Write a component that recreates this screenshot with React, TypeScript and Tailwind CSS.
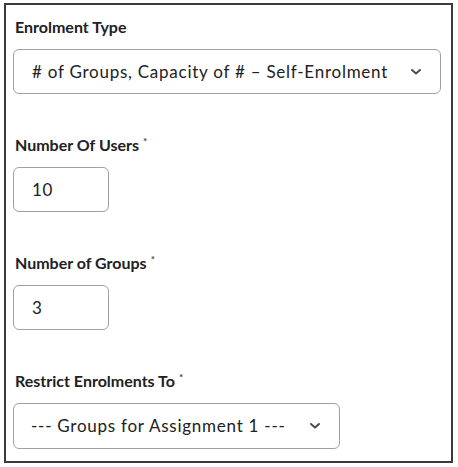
import React from "react";

const Chevron = () => (
  <svg width="12" height="8" viewBox="0 0 12 8" className="shrink-0">
    <path d="M2 2 L6 5.5 L10 2" fill="none" stroke="#494c4e" strokeWidth="2" strokeLinecap="round" strokeLinejoin="round" />
  </svg>
);

const Label = ({ text, req }: { text: string; req?: boolean }) => (
  <div className="flex items-start h-[22px] mb-[11px] pl-[2px] text-[16px] font-bold leading-[22px] text-[#202122]">
    <span>{text}</span>
    {req && <span className="ml-[4px] text-[10px] leading-[14px] text-[#494c4e]">*</span>}
  </div>
);

export default function App() {
  return (
    <div className="w-[458px] h-[467px] bg-white pt-[3px] pl-[4px]" style={{ fontFamily: "Lato, 'Open Sans', sans-serif" }}>
      <div className="w-[449px] h-[460px] border-2 border-[#3a3a3a] pt-[11px] pl-[7px] pr-[10px] flex flex-col">
        <Label text="Enrolment Type" />
        <div className="h-[45px] w-[428px] rounded-[6px] border border-[#9ea1a3] flex items-center justify-between pl-[18px] pr-[18px] text-[17px] tracking-[0.75px] text-[#202122]">
          <span># of Groups, Capacity of # – Self-Enrolment</span>
          <Chevron />
        </div>
        <div className="h-[40px]" />
        <Label text="Number Of Users" req />
        <div className="h-[45px] w-[96px] rounded-[6px] border border-[#9ea1a3] flex items-center pl-[18px] text-[17px] tracking-[0.75px] text-[#202122]">
          10
        </div>
        <div className="h-[40px]" />
        <Label text="Number of Groups" req />
        <div className="h-[45px] w-[96px] rounded-[6px] border border-[#9ea1a3] flex items-center pl-[18px] text-[17px] tracking-[0.75px] text-[#202122]">
          3
        </div>
        <div className="h-[40px]" />
        <Label text="Restrict Enrolments To" req />
        <div className="h-[46px] w-[327px] rounded-[6px] border border-[#9ea1a3] flex items-center justify-between pl-[17px] pr-[18px] text-[17px] tracking-[0.75px] text-[#202122]">
          <span>--- Groups for Assignment 1 ---</span>
          <Chevron />
        </div>
      </div>
    </div>
  );
}
